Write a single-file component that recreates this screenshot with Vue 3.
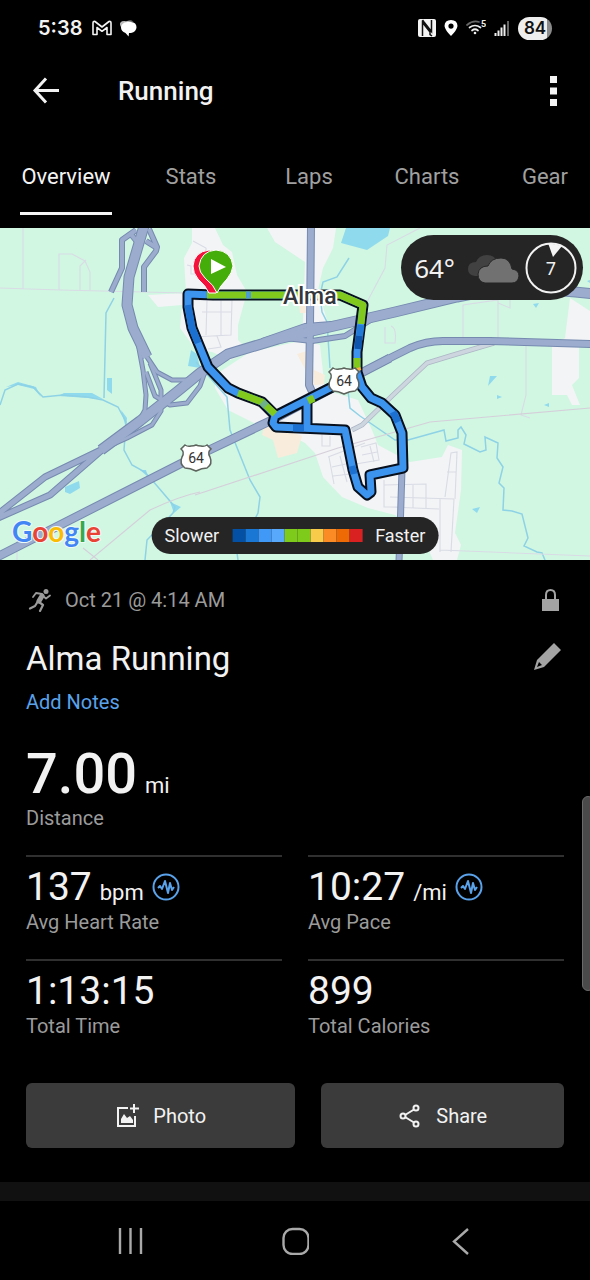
<script setup>
import { ref } from 'vue'

const tabs = ['Overview', 'Stats', 'Laps', 'Charts', 'Gear']
const activeTab = ref('Overview')

const stats = [
  { value: '137', unit: 'bpm', label: 'Avg Heart Rate', badge: true },
  { value: '10:27', unit: '/mi', label: 'Avg Pace', badge: true },
  { value: '1:13:15', label: 'Total Time' },
  { value: '899', label: 'Total Calories' }
]

const paceColors = [
  '#0450a4', '#1a78d4', '#4099f7', '#58a8fb', '#7ecb1c',
  '#7ecb1c', '#f9cb4a', '#fb8b24', '#ee6a04', '#d92121'
]

// highways, drawn twice: casing first, fill on top
const roads = [
  { w: 5, d: 'M130 233 L138 243 M146 241 L157 248' },
  { w: 5, d: 'M136 230 L122 240 L122 268 L111 292' },
  { w: 5, d: 'M149 229 L157 247 L156 251 L144 267 L144 292' },
  { w: 4, d: 'M147 357 L157 372 L172 380 L187 380 L203 371' },
  { w: 4, d: 'M137 338 L143 370 L146 395 L145 410 L139 421' },
  { w: 4, d: 'M146 372 L155 396 L170 405 L187 403 L200 386 L206 369' },
  { w: 4, d: 'M150 363 L161 390 L161 411 L152 425 L127 438 L105 448' },
  { w: 5, d: 'M262 341 L305 326 L345 323 L388 313 M285 338 L312 341 L345 336 L372 319' },
  { w: 10, d: 'M144 226 L129 277 L127 305 L133 328 L147 357' },
  { w: 6, d: 'M-2 514 L45 477 L103 449 M-2 518 L50 495 L103 449' },
  { w: 7, d: 'M311 226 L310 325 L309 385 L314 396' },
  { w: 6, d: 'M402 470 L399 562' },
  { w: 8, d: 'M-3 557 L182 463 L272 420 L340 384 L390 358' },
  { w: 7, d: 'M340 384 L390 358 L410 348 Q426 341 443 341 L490 341 L594 344' },
  { w: 10, d: 'M101 450 L140 421 L178 391 L200 373 L228 354 L278 339 L308 332 L395 312 L457 297 Q520 284 594 294' }
]

const route = 'M213 295 L188 294 L188 307 L192 328 L208 367 L228 388 L238 393 L262 402 L275 415 L273 423 L276 427 L345 430 L353 470 L358 487 L367 495 L371 492 L370 475 L403 468 L402 433 L395 415 L382 403 L371 398 L362 387 L357 372 L357 352 L363 305 L340 295 Z M275 416 L340 383 L357 372 M307 402 L307 427'

const pace = [
  { c: '#1b70d0', d: 'M188 305 L192 328 L198 343' },
  { c: '#82c91e', d: 'M207 295 L340 295 L363 305 L361 324' },
  { c: '#4e9cd0', d: 'M246 295 L251 295' },
  { c: '#247bd7', d: 'M361 325 L359 340' },
  { c: '#0d55ad', d: 'M359 336 L358 349' },
  { c: '#82c91e', d: 'M357 358 L357 368' },
  { c: '#f9b13b', d: 'M357 368 L358 371' },
  { c: '#82c91e', d: 'M238 393 L262 402 L275 414' },
  { c: '#6db08a', d: 'M262 402 L266 406' },
  { c: '#82c91e', d: 'M308 401 L314 398' },
  { c: '#1b70d0', d: 'M293 428 L304 428 M352 466 L354 474 M393 412 L398 422' }
]

const shields = [[344, 381], [196, 458]]
</script>

<template>
  <div class="screen">
    <div class="status-bar">
      <span class="clock">5:38</span>
      <svg width="20" height="16" viewBox="0 0 20 16" fill="none" stroke="#f4f4f4" stroke-width="1.6" stroke-linejoin="round">
        <path d="M1 14.5V3.2Q1 1 3 1.5L10 7L17 1.5Q19 1 19 3.2V14.5H15V7.5L10 11.3L5 7.5V14.5Z" />
      </svg>
      <svg class="chat" width="18" height="17" viewBox="0 0 18 17">
        <path d="M7 1.2Q12-.4 14.5 1.5Q5 1 2.5 8Q0 4 1.5 2.5Q3 .6 7 1.2Z" fill="#bbb" />
        <path d="M8 2H12Q17.5 2.5 17.5 7.3Q17.3 12 12 13H10L9.6 16.5L6.5 13Q2 11 2 7.5Q2.5 2.5 8 2Z" fill="#fff" />
      </svg>
      <div class="status-right">
        <svg width="18" height="18" viewBox="0 0 18 18">
          <rect width="18" height="18" rx="2" fill="#f4f4f4" />
          <path d="M4.5 17V3.5L12 13V15.500L14 17M4.500 1L6 3L13.500 12.500V1" fill="none" stroke="#111" stroke-width="1.5" />
        </svg>
        <svg width="14" height="18" viewBox="0 0 14 18">
          <path d="M7 1Q13.4 1 13.5 7Q13 11 7 17Q1 11 .5 7Q.6 1 7 1ZM7 4.5A2.6 2.6 0 1 0 7 9.7A2.6 2.6 0 1 0 7 4.5Z" fill="#fff" fill-rule="evenodd" />
        </svg>
        <svg width="20" height="18" viewBox="0 0 20 18" fill="none" stroke-width="1.7" stroke-linecap="round">
          <path d="M1 6Q7 1 13 3" stroke="#666" />
          <path d="M3.5 8.5Q9 4.5 14.5 8.5M6 11.5Q9 9 12 11.5" stroke="#eee" />
          <circle cx="9" cy="14" r="1.3" fill="#eee" />
          <text x="15" y="8" font-size="9" font-weight="700" fill="#eee">5</text>
        </svg>
        <svg width="16" height="18" viewBox="0 0 16 18" stroke="#eee" stroke-width="2">
          <path d="M1.5 17V14M4.5 17V11.5M7.500 17V8.500M10.500 17V5.500" />
          <path d="M14 17V2" stroke="#666" />
        </svg>
        <span class="battery">84</span>
      </div>
    </div>

    <header class="app-bar">
      <button class="icon-btn" aria-label="Back">
        <svg width="28" height="28" viewBox="0 0 28 28" fill="none" stroke="#f2f2f2" stroke-width="3">
          <path d="M27 13.500H3M14 1.500L3 13.500L14 25.500" />
        </svg>
      </button>
      <h1>Running</h1>
      <button class="icon-btn" aria-label="More options">
        <svg width="8" height="30" viewBox="0 0 8 30" fill="#f4f4f4">
          <rect width="7" height="7" /><rect y="11.5" width="7" height="7" /><rect y="23" width="7" height="7" />
        </svg>
      </button>
    </header>

    <nav class="tabs">
      <button v-for="tab in tabs" :key="tab" :class="{ active: tab === activeTab }" @click="activeTab = tab">
        <span>{{ tab }}</span>
      </button>
    </nav>

    <section class="map">
      <svg class="map-canvas" viewBox="0 228 590 332" role="img" aria-label="Route map">
        <rect y="228" width="590" height="332" fill="#d1f7e2" />

        <!-- built-up areas -->
        <g fill="#f3f4f6">
          <path d="M192 228H215L223 245L232 252L237 275L247 292L238 325V340L250 352L230 360L212 352L196 350L180 328L182 305L158 307L148 295L186 293L184 258L192 243Z" />
          <path d="M267 228H336L333 248L323 268L318 290L330 330L300 335L303 322L305 262L275 242Z" />
          <path d="M215 375L250 352L305 340L320 345L325 390L358 400L372 430L378 445L410 462L442 457L448 445L462 450L461 490L455 533L461 545L457 560H433L420 530L395 515L368 508L342 497L323 477L315 453L305 443L285 432L262 427L228 410L215 388Z" />
          <path d="M570 298L590 311V346H579V378L572 385L580 405H572L567 395H552V345L565 338Z" />
        </g>
        <g fill="#f8ecdc">
          <path d="M297 354L310 350L314 370L325 375L324 384L308 386L305 369Z" />
          <path d="M265 422L262 435L273 440L278 458L297 453L302 436L286 430Z" />
          <path d="M299 305H306V313H300Z" />
        </g>

        <!-- water -->
        <g fill="#90daee">
          <path d="M346 228L341 243L367 250L388 236L390 228Z" />
          <path d="M191 350L188 366L200 368L197 354Z" />
          <path d="M107 378H112V394L107 390Z" />
          <path d="M65 487L79 481L80 488L70 494L65 492Z" />
          <path d="M533 304L539 303L536 308ZM490 376H497L488 386ZM497 395L502 397L497 399ZM544 405L549 403V407ZM472 509L480 507L477 513ZM587 281L590 280V283Z" />
          <path d="M6 387L18 382L36 387L41 397L34 389L18 385ZM58 396L64 393H92L103 399L88 398ZM121 410L127 418L126 428ZM140 470L146 470L148 477ZM170 502L181 507L174 513Z" />
        </g>
        <g fill="none" stroke="#8ed2e6" stroke-width="1.5">
          <path d="M114 298L106 313L104 398" />
          <path d="M0 405L5 390L18 384L33 387L43 397L63 395L87 397L103 400L118 407L126 422L124 450L132 465L145 472L158 487L175 507L173 513L147 540L145 560" />
          <path d="M196 362L212 380L227 397L230 430L250 480L260 497L258 513L237 553L238 560" />
          <path d="M349 258L337 277L323 282L320 295L322 312L327 322L330 368M348 390L350 408L360 416L395 440L408 440L444 430L446 441L458 438V430L461 427L466 435L464 444L480 452L486 450L485 437L498 443L497 458L503 467L499 483L504 488L503 510L512 511L522 514L528 538L524 546L537 552L542 553L545 560" />
        </g>

        <!-- streets -->
        <g fill="none" stroke="#d9dbe5" stroke-width="1.1">
          <path d="M0 288L60 290L186 293M23 228V289M59 290V254H72L85 261L90 272V290M80 290V266L86 260" />
          <path d="M193 241L206 248V258M187 265L191 266V274H200M195 300H232L231 335L193 337M202 312H231M207 300L206 335M217 336L221 347L208 349M221 296V335" />
          <path d="M367 302L385 268L387 245L420 228" />
          <path d="M463 338V305L498 300V338M498 303L510 308V300M526 346V395L521 415L530 418M391 326Q397 328 395 343H385V327" />
          <path d="M195 495L338 448L395 432L430 422L590 408M83 548L98 560M90 560L150 510Q180 496 200 492" stroke="#d5cfda" />
          <path d="M322 429V446H330V436M328 457L365 443M334 484L329 457M361 447L376 443L379 460L350 465M332 467L350 463M333 476L350 474M340 456L347 482M370 446L374 462M362 455L377 452M384 480V507H398M384 485L426 484V508M413 485V508M390 497L454 499M390 507L439 509M440 498V552M454 499L451 552M445 497L451 453L457 452L455 499M447 472H456M440 550L590 556M17 528V560" />
        </g>

        <path d="M352 430L362 425L393 395L427 363L450 356L494 343" fill="none" stroke="#acb6c5" stroke-width="5" />
        <path d="M352 430L362 425L393 395L427 363L450 356L494 343" fill="none" stroke="#cdd5df" stroke-width="3.5" />

        <g fill="none" stroke-linejoin="round">
          <path v-for="r in roads" :key="r.d" :d="r.d" stroke="#768ab0" :stroke-width="r.w + 1" />
          <path v-for="r in roads" :key="r.d + 'f'" :d="r.d" stroke="#9bacce" :stroke-width="r.w - 1" />
        </g>

        <!-- recorded track -->
        <g fill="none" stroke-linejoin="round">
          <path :d="route" stroke="#07101c" stroke-width="11" />
          <path :d="route" stroke="#3d94ef" stroke-width="7" />
          <path v-for="p in pace" :key="p.d" :d="p.d" :stroke="p.c" stroke-width="7" />
        </g>

        <g v-for="[x, y] in shields" :key="x" :transform="`translate(${x} ${y})`">
          <path d="M-11-13Q-8-11-5-12Q-2-12 0-13Q2-12 5-12Q8-11 11-13L15-9Q11-6 14-1Q17 6 11 10Q6 10 0 13Q-6 10-11 10Q-17 6-14-1Q-11-6-15-9Z" fill="#fff" stroke="#5d635d" stroke-width="1.500" />
          <text y="5" class="shield-text">64</text>
        </g>

        <text x="283" y="304" class="town">Alma</text>

        <path d="M209 293Q206 286 198 279Q193 273 193 266Q194 252 209 250Q225 252 226 267Q225 277 216 293Z" fill="#f4123c" stroke="#fff" />
        <path d="M217 293Q214 285 205 278Q199 272 199 266Q201 251 216 250Q231 251 233 266Q232 273 227 279Q220 286 217 293Z" fill="#45ad0a" stroke="#fff" />
        <path d="M211 259V274L226 267Z" fill="#fff" />

        <text x="12" y="542" class="google">
          <tspan fill="#4285f4">G</tspan><tspan fill="#ea4335">o</tspan><tspan fill="#fbbc05">o</tspan><tspan fill="#4285f4">g</tspan><tspan fill="#34a853">l</tspan><tspan fill="#ea4335">e</tspan>
        </text>
      </svg>

      <div class="weather">
        <span class="temp">64°</span>
        <svg width="52" height="32" viewBox="0 0 52 32">
          <path d="M8 24Q1 23 1 17Q1 10 9 10Q12 3 20 3Q28 3 30 10V24Z" fill="#414141" />
          <path d="M18 31Q11 30 11 22Q12 14 21 14Q24 6 34 6Q43 6 45 17Q52 18 52 24Q51 31 45 31Z" fill="#717171" stroke="#252525" />
        </svg>
        <div class="wind">
          <svg width="52" height="52" viewBox="0 0 52 52">
            <circle cx="26" cy="26" r="24.5" fill="none" stroke="#f2f2f2" stroke-width="2" />
            <path d="M23 1L37 4L28 15Z" fill="#f4f4f4" />
          </svg>
          <span>7</span>
        </div>
      </div>

      <div class="legend">
        <span>Slower</span>
        <div class="swatches">
          <i v-for="(c, i) in paceColors" :key="i" :style="{ background: c }"></i>
        </div>
        <span>Faster</span>
      </div>
    </section>

    <main class="details">
      <div class="row date-row">
        <svg width="24" height="24" viewBox="0 0 24 24" fill="none" stroke="#9b9b9b" stroke-linecap="round" stroke-linejoin="round">
          <circle cx="18" cy="3.5" r="2.5" fill="#9b9b9b" stroke="none" />
          <path d="M14 8L11 13" stroke-width="5" />
          <path d="M14 6L8 5L5 9M15 8L18 10.5L22 7.5" stroke-width="1.8" />
          <path d="M9.5 14L7 18L2 20.5M11 14L15 17L12 23" stroke-width="2.2" />
        </svg>
        <span class="date">Oct 21 @ 4:14 AM</span>
        <svg class="end" width="24" height="24" viewBox="0 0 24 24">
          <path d="M2 11H19V23H2Z" fill="#a3a3a3" />
          <path d="M6 12V7Q6 2 10.5 2Q15 2 15 7V12" fill="none" stroke="#a3a3a3" stroke-width="2" />
        </svg>
      </div>

      <div class="row title-row">
        <h2>Alma Running</h2>
        <button class="icon-btn end" aria-label="Edit name">
          <svg width="30" height="30" viewBox="0 0 30 30">
            <path d="M20 0L27 7L10 24L0 27L3 17ZM5 19L3 24L8 22Z" fill="#a3a3a3" fill-rule="evenodd" />
          </svg>
        </button>
      </div>
      <a class="notes" href="#">Add Notes</a>

      <div class="distance"><b>7.00</b><span class="unit">mi</span></div>
      <div class="label">Distance</div>

      <div class="stats">
        <div v-for="s in stats" :key="s.label" class="stat">
          <div class="value">
            {{ s.value }}<span v-if="s.unit" class="unit">{{ s.unit }}</span>
            <svg v-if="s.badge" width="28" height="28" viewBox="0 0 28 28" fill="none" stroke="#5aa2ea" stroke-width="2">
              <circle cx="14" cy="14" r="12.5" />
              <path d="M6 15L8 13L10 16L13 8L16 20L18 10L20 17L22 14" stroke-linejoin="round" />
            </svg>
          </div>
          <div class="label">{{ s.label }}</div>
        </div>
      </div>

      <div class="actions">
        <button class="photo">
          <svg width="24" height="24" viewBox="0 0 24 24" fill="none" stroke="#f2f2f2" stroke-width="2">
            <path d="M13 4H3V22H20V12M19 0V9M15 4.5H24" />
            <path d="M6 19V15L9 10L12 14L15 12L18 16V19Z" fill="#f2f2f2" stroke="none" />
          </svg>
          Photo
        </button>
        <button class="share">
          <svg width="24" height="24" viewBox="0 0 24 24" fill="none" stroke="#f2f2f2" stroke-width="2">
            <circle cx="5" cy="12" r="2.500" /><circle cx="18" cy="4" r="2.500" /><circle cx="18" cy="20" r="2.500" />
            <path d="M7 11L16 5.500M7 13L16 18.500" />
          </svg>
          Share
        </button>
      </div>
    </main>

    <div class="separator"></div>

    <footer class="nav-bar">
      <button aria-label="Recents">
        <svg width="28" height="28" viewBox="0 0 28 28" stroke="#a9a9a9" stroke-width="2.4"><path d="M4 1V27M14.500 1V27M25 1V27" /></svg>
      </button>
      <button aria-label="Home">
        <svg width="28" height="28" viewBox="0 0 28 28" fill="none" stroke="#a9a9a9" stroke-width="2.4"><rect x="2.500" y="2" width="25" height="25" rx="9" /></svg>
      </button>
      <button aria-label="Back">
        <svg width="28" height="28" viewBox="0 0 28 28" fill="none" stroke="#a9a9a9" stroke-width="2.4"><path d="M22 2L8 14.500L22 27" /></svg>
      </button>
    </footer>

    <div class="scroll-thumb"></div>
  </div>
</template>

<style>
body {
  background: #000;
}
</style>

<style scoped>
.screen {
  position: relative;
  overflow: hidden;
  background: #000;
  color: #f2f2f2;
  font-family: Roboto, "Liberation Sans", sans-serif;
}

button {
  padding: 0;
  border: 0;
  background: none;
  color: inherit;
  font: inherit;
}

svg {
  display: block;
  flex: none;
}

.status-bar {
  display: flex;
  align-items: center;
  height: 56px;
  padding: 0 38px;
}

.clock {
  margin-right: 10px;
  font: 600 20px Inter, sans-serif;
}

.chat {
  margin-left: 7px;
}

.status-right {
  display: flex;
  align-items: center;
  gap: 8px;
  margin-left: auto;
}

.battery {
  width: 34px;
  border-radius: 12px;
  background: linear-gradient(90deg, #eee 84%, #8a8a8a 84%);
  color: #111;
  font: 600 17px/23px Inter, sans-serif;
  text-align: center;
}

.app-bar {
  display: flex;
  align-items: center;
  height: 70px;
  padding: 0 32px;
}

.app-bar h1 {
  flex: 1;
  margin: 0 0 0 58px;
  font-size: 26px;
  font-weight: 500;
}

.tabs {
  display: flex;
  height: 102px;
}

.tabs button {
  flex: none;
  min-width: 118px;
  padding: 3px 20px 0;
  color: #a0a0a0;
  font-size: 22px;
}

.tabs button:first-child {
  min-width: 132px;
}

.tabs span {
  display: block;
  line-height: 70px;
  border-bottom: 3px solid transparent;
}

.tabs .active {
  color: #f4f4f4;
}

.tabs .active span {
  border-color: #f4f4f4;
}

.map {
  position: relative;
}

.map-canvas {
  width: 100%;
}

.shield-text {
  fill: #333;
  font-size: 14px;
  text-anchor: middle;
}

.town {
  fill: #33363b;
  stroke: #fff;
  stroke-width: 4px;
  paint-order: stroke;
  font-size: 23px;
  font-weight: 500;
}

.google {
  stroke: #eefaf4;
  stroke-width: 2px;
  stroke-linejoin: round;
  paint-order: stroke;
  font: 700 28px Lato, sans-serif;
}

.weather {
  position: absolute;
  top: 7px;
  right: 7px;
  display: flex;
  align-items: center;
  gap: 6px;
  height: 65px;
  padding: 0 6px 0 13px;
  border-radius: 33px;
  background: #252525;
  font-family: "Noto Sans", sans-serif;
}

.temp {
  margin-right: 6px;
  font-size: 26px;
}

.wind {
  display: grid;
  place-items: center;
}

.wind > * {
  grid-area: 1 / 1;
}

.wind span {
  font-size: 18px;
}

.legend {
  position: absolute;
  bottom: 6px;
  left: 50%;
  display: flex;
  align-items: center;
  gap: 13px;
  height: 37px;
  padding: 0 13px;
  border-radius: 19px;
  background: #252525;
  font-size: 18px;
  transform: translateX(-50%);
}

.swatches {
  display: flex;
}

.swatches i {
  width: 13px;
  height: 13px;
}

.details {
  padding: 28px 26px 34px;
}

.row {
  display: flex;
  align-items: center;
}

.date-row {
  height: 24px;
  margin-bottom: 24px;
  padding-left: 2px;
  color: #9b9b9b;
  font-size: 20px;
}

.date {
  margin-left: 13px;
}

.end {
  margin-left: auto;
}

.title-row {
  height: 44px;
  margin-bottom: 10px;
}

h2 {
  margin: 0;
  font-size: 33px;
  font-weight: 400;
}

.notes {
  display: block;
  margin-bottom: 27px;
  color: #5aa2ea;
  font-size: 20px;
  line-height: 24px;
  text-decoration: none;
}

.distance {
  font-size: 56px;
  line-height: 66px;
}

.distance b {
  font-weight: 500;
}

.unit {
  margin-left: 8px;
  font-size: 22px;
  line-height: 24px;
}

.label {
  color: #9b9b9b;
  font-size: 20px;
  line-height: 22px;
}

.stats {
  display: grid;
  grid-template-columns: 1fr 1fr;
  column-gap: 26px;
  margin-top: 26px;
}

.stat {
  padding: 6px 0 26px;
  border-top: 2px solid #303030;
}

.value {
  display: flex;
  align-items: baseline;
  font-size: 39px;
  line-height: 48px;
}

.value svg {
  align-self: center;
  margin-left: 8px;
}

.actions {
  display: flex;
  gap: 26px;
  margin-top: 20px;
}

.actions button {
  display: flex;
  align-items: center;
  justify-content: center;
  gap: 14px;
  height: 65px;
  border-radius: 6px;
  background: #3b3b3b;
  font-size: 20px;
}

.actions .photo {
  flex: 10 1 0;
}

.actions .share {
  flex: 9 1 0;
}

.separator {
  height: 19px;
  background: #111;
}

.nav-bar {
  display: flex;
  justify-content: center;
  align-items: center;
  height: 80px;
}

.nav-bar button {
  display: grid;
  place-items: center;
  width: 28%;
}

.scroll-thumb {
  position: absolute;
  top: 796px;
  right: -4px;
  width: 10px;
  height: 193px;
  border: 1px solid #6a6a6a;
  border-radius: 6px;
  background: #4a4a4a;
}
</style>
